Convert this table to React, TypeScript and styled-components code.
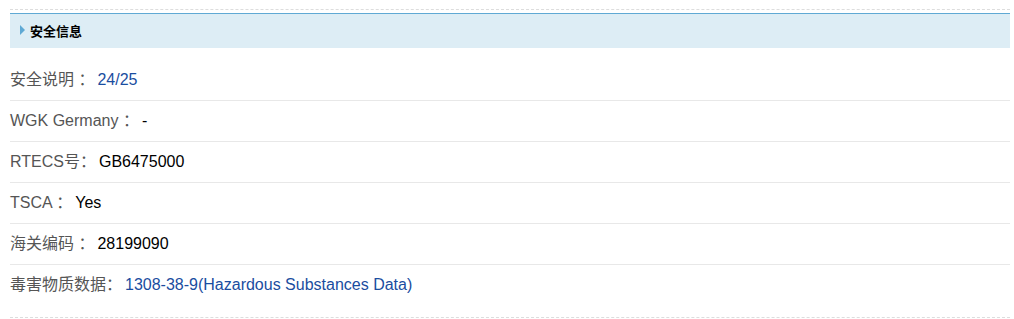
import React from "react";
import styled, { createGlobalStyle } from "styled-components";

interface InfoItem {
  label: string;
  value: string;
  link?: boolean;
}

const items: InfoItem[] = [
  { label: "安全说明 ：", value: "24/25", link: true },
  { label: "WGK Germany ：", value: "-" },
  { label: "RTECS号：", value: "GB6475000" },
  { label: "TSCA ：", value: "Yes" },
  { label: "海关编码 ：", value: "28199090" },
  { label: "毒害物质数据：", value: "1308-38-9(Hazardous Substances Data)", link: true },
];

const App: React.FC = () => {
  return (
    <>
      <GlobalStyle />
      <Container>
        <Section>
          <Header>
            <Arrow />
            <Title>安全信息</Title>
          </Header>
          <List>
            {items.map((item) => (
              <Row key={item.label}>
                <Label>{item.label}</Label>
                <Value $link={item.link}>{item.value}</Value>
              </Row>
            ))}
          </List>
        </Section>
      </Container>
    </>
  );
};

export default App;

const GlobalStyle = createGlobalStyle`
  body {
    margin: 0;
    background: #fff;
    font-family: "Liberation Sans", Arial, "Noto Sans CJK SC", sans-serif;
  }
`;

const Container = styled.div`
  width: 1000px;
  padding: 9px 10px 0;
`;

const Section = styled.div`
  border-top: 1px dashed #dddddd;
  border-bottom: 1px dashed #dddddd;
  padding-top: 3px;
  padding-bottom: 12px;
`;

const Header = styled.div`
  display: flex;
  align-items: center;
  height: 34px;
  border-top: 1px solid #5fa9d4;
  background-color: #ddedf5;
  padding-left: 10px;
`;

const Arrow = styled.span`
  width: 0;
  height: 0;
  border-top: 5px solid transparent;
  border-bottom: 5px solid transparent;
  border-left: 5px solid #5fa9d4;
  margin-right: 5px;
  margin-top: -2px;
`;

const Title = styled.h3`
  margin: 0 0 2px;
  font-size: 13px;
  font-weight: bold;
  color: #000;
`;

const List = styled.div`
  margin-top: 12px;
`;

const Row = styled.div`
  height: 40px;
  line-height: 39px;
  font-size: 16px;
  border-bottom: 1px solid #e8e8e8;
  white-space: nowrap;

  &:last-child {
    border-bottom: none;
  }
`;

const Label = styled.span`
  color: #555;
`;

const Value = styled.span<{ $link?: boolean }>`
  margin-left: 3px;
  color: ${(p) => (p.$link ? "#1a4da0" : "#000")};
`;
